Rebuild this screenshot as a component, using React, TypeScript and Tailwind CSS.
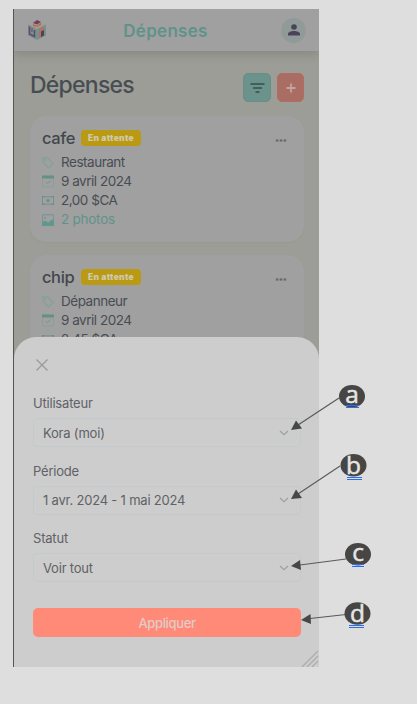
import React from "react";

function Logo() {
  return (
    <svg width="20" height="22" viewBox="0 0 20 22" className="shrink-0">
      <path d="M10 1 L19 5.5 L10 10 L1 5.5Z" fill="#a99a96" />
      <path d="M10 1 L14 3 L10 5.5 L6 4Z" fill="#68435a" />
      <path d="M6 5 L10 7 L14 3.5 L14 6 L10 8 L6 7Z" fill="#b5694f" />
      <path d="M1 5.5 L10 10 V21 L1 16.5Z" fill="#7e8f91" />
      <path d="M2.5 7.5 V15 L7.5 17.5 V11" stroke="#5a5169" strokeWidth="1.6" fill="none" />
      <path d="M5 9 V13" stroke="#5a5169" strokeWidth="1" />
      <path d="M10 10 L19 5.5 V16.5 L10 21Z" fill="#75918c" />
      <path d="M12 10.5 L17 8 V11 L14 12.5 V18 L12 19Z" fill="#b5705b" />
      <path d="M14 12.5 L17 11 V16.5 L14 18Z" fill="#51425c" />
    </svg>
  );
}

function Tag() {
  return (
    <svg width="12" height="13" viewBox="0 0 12 13" fill="none" stroke="#86a19b" strokeWidth="1.5">
      <path d="M.8 1.5 H5.3 L11.2 7.5 L6.7 12 L.8 6Z" strokeLinejoin="round" />
      <circle cx="3.3" cy="4" r=".6" />
    </svg>
  );
}

function Calendar() {
  return (
    <svg width="12" height="13" viewBox="0 0 12 13" fill="none">
      <path d="M.5 1 H11.5 V12 H.5Z" stroke="#86a19a" />
      <path d="M0 .5 H12 V3.5 H0Z" fill="#668f87" />
      <path d="M4 7 L5.5 8.5 L8.5 5.8" stroke="#71958e" />
    </svg>
  );
}

function Cash() {
  return (
    <svg width="12" height="9" viewBox="0 0 12 9" fill="none">
      <path d="M.5 .8 H11.5 V8.2 H.5Z" stroke="#6f958e" />
      <path d="M0 0H2.5L0 2.5Z M12 0H9.5L12 2.5Z M0 9H2.5L0 6.5Z M12 9H9.5L12 6.5Z" fill="#668f87" />
      <circle cx="6" cy="4.5" r="1.6" fill="#668f87" />
    </svg>
  );
}

function Photo() {
  return (
    <svg width="12" height="12" viewBox="0 0 12 12" fill="none">
      <path d="M.5 .8 H11.5 V11 H.5Z" stroke="#6f988f" />
      <path d="M0 8.5 L3 6.5 L6.3 8.5 L9 6 L12 5.5 V12 H0Z" fill="#61978c" />
      <circle cx="3" cy="3.7" r="1" fill="#71958e" />
    </svg>
  );
}

function Row({ icon, children, green }: { icon: React.ReactNode; children: React.ReactNode; green?: boolean }) {
  return (
    <div className={`flex h-[19px] items-center text-[13.5px] ${green ? "tracking-[-0.25px] text-[#5f9389]" : "tracking-[-0.48px] text-[#484d53]"}`}>
      <span className="flex w-[19px] items-center">{icon}</span>
      <span className="whitespace-nowrap">{children}</span>
    </div>
  );
}

function Card({ title, place, amount, photos }: { title: string; place: string; amount: string; photos?: string }) {
  return (
    <article className="h-[126px] shrink-0 rounded-[16px] bg-[#a0a0a0] pl-[12px] pr-[17px] pt-[11px] shadow-[0_1px_2px_rgba(80,80,80,0.06)]">
      <div className="flex h-[22px] items-center">
        <h2 className="w-[33px] whitespace-nowrap text-[16.5px] font-medium tracking-[-0.4px] text-[#43474c]">{title}</h2>
        <span className="ml-[6px] flex h-[16px] w-[60px] items-center justify-center rounded-[4px] bg-[#b99a12] text-[8.5px] font-black tracking-[0.3px] text-[#cfc9ad]">
          En attente
        </span>
        <svg className="ml-auto mt-[4px]" width="12" height="3" viewBox="0 0 12 3">
          <path d="M.5 .5 H11.5 V2.5 H.5Z" fill="#8a8a8a" />
          <path d="M1 1.5 H3 M5 1.5 H7 M9 1.5 H11" stroke="#686868" strokeWidth="2" />
        </svg>
      </div>
      <div className="mt-[4px]">
        <Row icon={<Tag />}>{place}</Row>
        <Row icon={<Calendar />}>9 avril 2024</Row>
        <Row icon={<Cash />}>{amount}</Row>
        {photos && <Row icon={<Photo />} green>{photos}</Row>}
      </div>
    </article>
  );
}

function Field({ label, value }: { label: string; value: string }) {
  return (
    <div className="flex h-[67.5px] flex-col text-[13px] tracking-[-0.2px] text-[#5f6266]">
      <span className="flex h-[22px] items-center pt-[2px]">{label}</span>
      <div className="mt-[4px] flex h-[29px] items-center justify-between rounded-[4px] border border-[#c3cace] pl-[9px] pr-[11px]">
        <span className="pt-[2px]">{value}</span>
        <svg width="10" height="6" viewBox="0 0 10 6" fill="none" stroke="#9da0a2" strokeWidth="1.2">
          <path d="M1 1 L5 4.7 L9 1" />
        </svg>
      </div>
    </div>
  );
}

const marks = [
  { letter: "a", cx: 352, cy: 396.3, base: 402.5, line: "M339 398 L298 425", head: "291,430 296,420.5 302,428.5", ux: 346, uw: 13, uy: 405 },
  { letter: "b", cx: 353.5, cy: 465.3, base: 474, line: "M340 466 L298 494", head: "291,499 296,489.5 302,498", ux: 347, uw: 15, uy: 477 },
  { letter: "c", cx: 358, cy: 554.3, base: 561, line: "M346 559 L300 565", head: "291,566 300,560 301,570", ux: 352, uw: 12, uy: 564 },
  { letter: "d", cx: 357.5, cy: 613.5, base: 622, line: "M346 614.5 L310 618.5", head: "301,620 310.5,614 311,624", ux: 349, uw: 15, uy: 625 },
];

function Annotations() {
  return (
    <svg className="absolute left-0 top-0" width="417" height="704">
      {marks.map((m) => (
        <g key={m.letter}>
          <path d={m.line} stroke="#5a5a5a" strokeWidth="1.2" />
          <polygon points={m.head} fill="#474747" />
          <ellipse cx={m.cx} cy={m.cy} rx="13" ry="11.3" fill="#474645" />
          <text x={m.cx} y={m.base} textAnchor="middle" fill="#e6e6e6" stroke="#e6e6e6" strokeWidth="0.5" className="font-['Open_Sans',sans-serif] text-[24.5px]">
            {m.letter}
          </text>
          <rect x={m.ux} y={m.uy} width={m.uw} height="1" fill="#286cf0" />
          <rect x={m.ux} y={m.uy + 2} width={m.uw} height="1" fill="#286cf0" />
        </g>
      ))}
    </svg>
  );
}

export default function App() {
  return (
    <div className="relative h-[704px] w-[417px] overflow-hidden bg-[#dedede] pl-[13px] pt-[9px] font-['Inter',sans-serif]">
      <div className="relative h-[658px] w-[306px] overflow-hidden border-l border-[#555555] bg-[#9c9d96]">
        <header className="relative grid h-[42px] grid-cols-[1fr_auto_1fr] items-center bg-[#a0a0a0] pl-[13px] pr-[13px] shadow-[0_3px_9px_rgba(70,70,70,0.25)]">
          <Logo />
          <span className="mr-[2px] mt-[4px] text-[17px] font-semibold tracking-[0.3px] text-[#5f9389]">Dépenses</span>
          <span className="flex h-[25px] w-[25px] items-center justify-center justify-self-end rounded-full bg-[#909b99]">
            <svg width="12" height="12" viewBox="0 0 12 12" fill="#494457" className="-mt-[1px]">
              <circle cx="6" cy="3" r="2.8" />
              <path d="M0 11.5 V10 C0 8 3 7 6 7 S12 8 12 10 V11.5Z" />
            </svg>
          </span>
        </header>
        <main className="pl-[16px] pr-[15px] pt-[22px]">
          <div className="flex h-[29px] items-center">
            <h1 className="-mt-[5px] text-[23px] font-medium tracking-[-0.75px] text-[#484d53]">Dépenses</h1>
            <span className="ml-auto flex h-[29px] w-[28px] items-center justify-center rounded-[5px] border border-[#668f88] bg-[#6b928b]">
              <svg width="15" height="10" viewBox="0 0 15 10" stroke="#36504c" strokeWidth="1.7">
                <path d="M.5 1 H14.5 M3 5 H12 M5.5 9 H9.5" />
              </svg>
            </span>
            <span className="ml-[6px] flex h-[29px] w-[27px] items-center justify-center rounded-[5px] border border-[#b46b60] bg-[#aa6d63]">
              <svg width="10" height="10" viewBox="0 0 10 10" stroke="#c3a49f" strokeWidth="1.8">
                <path d="M5 .5 V9.5 M.5 5 H9.5" />
              </svg>
            </span>
          </div>
          <div className="mt-[14px] flex flex-col gap-[13px]">
            <Card title="cafe" place="Restaurant" amount="2,00 $CA" photos="2 photos" />
            <Card title="chip" place="Dépanneur" amount="2,45 $CA" />
          </div>
        </main>
        <section className="absolute bottom-0 left-0 h-[330px] w-[305px] rounded-t-[22px] bg-[#cdcdcd] pl-[19px] pr-[18px] pt-[22px]">
          <svg width="12" height="12" viewBox="0 0 12 12" stroke="#97999b" strokeWidth="1.2" className="ml-[3px]">
            <path d="M.5 .5 L11.5 11.5 M11.5 .5 L.5 11.5" />
          </svg>
          <div className="mt-[21px]">
            <Field label="Utilisateur" value="Kora (moi)" />
            <Field label="Période" value="1 avr. 2024 - 1 mai 2024" />
            <Field label="Statut" value="Voir tout" />
          </div>
          <button className="mt-[13.5px] flex h-[29px] w-full items-center justify-center rounded-[5px] bg-[#ff8a78] pt-[2px] text-[13px] font-medium tracking-[-0.35px] text-[#e3cbc7]">
            Appliquer
          </button>
          <svg className="absolute bottom-0 right-0" width="18" height="17" viewBox="0 0 18 17" stroke="#aaaaaa" strokeWidth="1.1">
            <path d="M1 17 L17 1 M6 17 L17 6 M11 17 L17 11" />
          </svg>
        </section>
      </div>
      <Annotations />
    </div>
  );
}
